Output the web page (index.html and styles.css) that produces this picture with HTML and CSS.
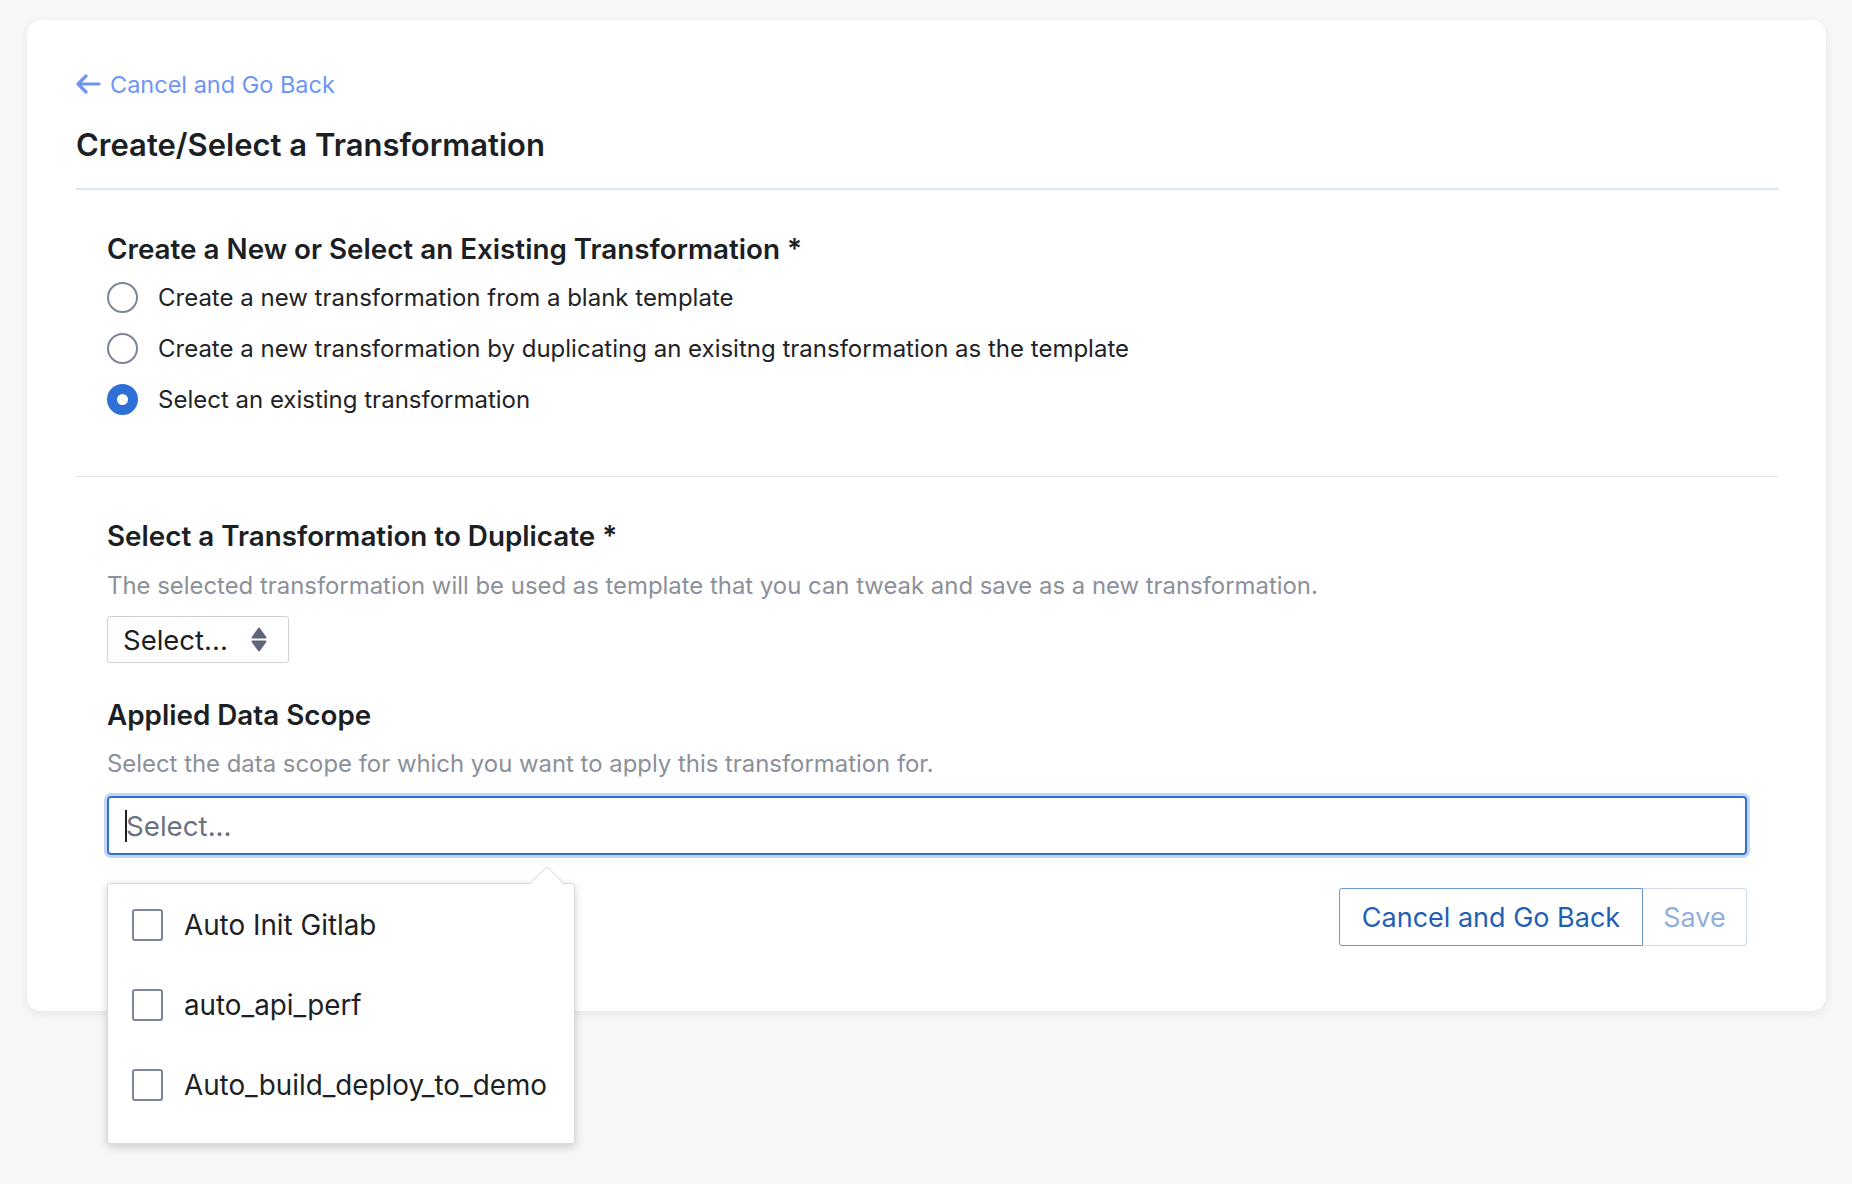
FILE: index.html
```html
<!DOCTYPE html>
<html>
<head>
<meta charset="utf-8">
<link rel="stylesheet" href="styles.css">
</head>
<body>
<div class="card">
  <a class="back-link" href="#">
    <svg class="back-arrow" width="26" height="22" viewBox="0 0 26 22"><path d="M24 11H3.5M11 3L3 11L11 19" fill="none" stroke="#6e95f6" stroke-width="3.2" stroke-linecap="round" stroke-linejoin="round"/></svg>
    <span>Cancel and Go Back</span>
  </a>
  <h1 class="title">Create/Select a Transformation</h1>
  <div class="divider-blue"></div>

  <div class="section section-first">
    <h2 class="heading">Create a New or Select an Existing Transformation *</h2>
    <div class="radio-row"><span class="radio"></span><span class="label">Create a new transformation from a blank template</span></div>
    <div class="radio-row"><span class="radio"></span><span class="label">Create a new transformation by duplicating an exisitng transformation as the template</span></div>
    <div class="radio-row"><span class="radio radio-checked"></span><span class="label">Select an existing transformation</span></div>
  </div>
  <div class="divider-gray"></div>

  <div class="section section-second">
    <h2 class="heading">Select a Transformation to Duplicate *</h2>
    <p class="desc desc-first">The selected transformation will be used as template that you can tweak and save as a new transformation.</p>
    <div class="select-box">
      <span>Select...</span>
      <svg class="updown" width="16" height="25" viewBox="0 0 16 25"><path d="M8 1.5L14.5 10.5H1.5Z M8 23.5L14.5 14.5H1.5Z" fill="#5d6778" stroke="#5d6778" stroke-width="2" stroke-linejoin="round"/></svg>
    </div>

    <h2 class="heading heading-scope">Applied Data Scope</h2>
    <p class="desc">Select the data scope for which you want to apply this transformation for.</p>
    <div class="input-wrap">
      <div class="input"><span class="caret"></span><span class="placeholder">Select...</span></div>
      <div class="popover">
        <div class="popover-arrow"></div>
        <div class="item"><span class="checkbox"></span><span class="item-label">Auto Init Gitlab</span></div>
        <div class="item"><span class="checkbox"></span><span class="item-label">auto_api_perf</span></div>
        <div class="item"><span class="checkbox"></span><span class="item-label">Auto_build_deploy_to_demo</span></div>
      </div>
    </div>
    <div class="actions">
      <button class="btn btn-cancel">Cancel and Go Back</button>
      <button class="btn btn-save">Save</button>
    </div>
  </div>
</div>
</body>
</html>
```

FILE: styles.css
```css
html, body {
  margin: 0;
  padding: 0;
  background: #f7f7f7;
  font-family: Inter, "Noto Sans", "Liberation Sans", sans-serif;
  color: #1c1f24;
}
body {
  padding: 20px 26px 0 27px;
  height: 1184px;
  box-sizing: border-box;
  overflow: hidden;
}
.card {
  background: #fff;
  border-radius: 14px;
  box-shadow: 0 3px 10px rgba(0,0,0,0.07), 0 0 1px rgba(0,0,0,0.05);
  height: 991px;
  box-sizing: border-box;
  padding: 50px 47px 0 48px;
}
.back-link {
  display: flex;
  align-items: center;
  gap: 9px;
  height: 28px;
  color: #6e95f6;
  text-decoration: none;
  font-size: 23.5px;
}
.title {
  margin: 29px 0 0 1px;
  font-size: 31px;
  line-height: 36px;
  font-weight: 600;
  color: #1c1f24;
}
.divider-blue {
  margin: 25px 0 0 1px;
  height: 2px;
  background: #dbe5f8;
}
.divider-gray {
  margin-left: 1px;
  height: 1px;
  background: #e1e3e6;
}
.section {
  padding: 0 32px 0 32px;
}
.section-first {
  padding-top: 43px;
  padding-bottom: 51px;
}
.section-second {
  padding-top: 43px;
  position: relative;
}
.heading {
  margin: 0;
  font-size: 27.8px;
  line-height: 32px;
  font-weight: 600;
  color: #1c1f24;
}
.section-first .heading {
  margin-bottom: 7px;
}
.radio-row {
  display: flex;
  align-items: center;
  height: 51px;
  gap: 20px;
}
.radio {
  width: 31px;
  height: 31px;
  box-sizing: border-box;
  border: 2px solid #7b8596;
  border-radius: 50%;
  flex: none;
  background: #fff;
}
.radio-checked {
  border: 10px solid #2f6fd6;
  background: #fff;
}
.label {
  font-size: 24px;
  line-height: 30px;
  color: #1f2328;
}
.desc {
  margin: 18px 0 0 0;
  font-size: 23.9px;
  line-height: 30px;
  color: #8c9099;
}
.desc-first {
  margin-top: 19px;
}
.select-box {
  margin-top: 15px;
  width: 182px;
  height: 47px;
  box-sizing: border-box;
  border: 1.5px solid #cfd1d4;
  border-radius: 3px;
  display: flex;
  align-items: center;
  padding: 0 21px 0 15px;
  justify-content: space-between;
  font-size: 27.5px;
  color: #1c1f24;
}
.heading-scope {
  margin-top: 36px;
}
.input-wrap {
  position: relative;
  margin-top: 17px;
}
.input {
  height: 59px;
  box-sizing: border-box;
  border: 2.5px solid #2f6fd6;
  border-radius: 4px;
  box-shadow: 0 0 0 3px #c3d6f4;
  display: flex;
  align-items: center;
  padding-left: 16px;
  font-size: 27.7px;
}
.caret {
  width: 2px;
  height: 32px;
  background: #1c1f24;
  margin-right: -1px;
}
.placeholder {
  color: #6b7280;
}
.popover {
  position: absolute;
  left: 0;
  top: 87px;
  width: 468px;
  height: 261px;
  background: #fff;
  border: 1px solid #d6d8db;
  border-radius: 3px;
  box-shadow: 0 3px 10px rgba(0,0,0,0.18);
  box-sizing: border-box;
  padding-top: 1px;
  z-index: 5;
}
.popover-arrow {
  position: absolute;
  left: 426px;
  top: -13px;
  width: 25px;
  height: 25px;
  background: #fff;
  border-left: 1px solid #d6d8db;
  border-top: 1px solid #d6d8db;
  transform: rotate(45deg);
  border-top-left-radius: 4px;
}
.item {
  position: relative;
  display: flex;
  align-items: center;
  height: 80px;
  padding-left: 24px;
  gap: 21px;
}
.checkbox {
  width: 31px;
  height: 32px;
  box-sizing: border-box;
  border: 2px solid #7b8596;
  border-radius: 3px;
  flex: none;
}
.item-label {
  font-size: 27.8px;
  color: #1c1f24;
}
.actions {
  margin-top: 33px;
  display: flex;
  justify-content: flex-end;
}
.btn {
  height: 58px;
  box-sizing: border-box;
  background: #fff;
  font-family: inherit;
  font-size: 27px;
  padding: 0;
  margin: 0;
  cursor: pointer;
}
.btn-cancel {
  width: 304px;
  border: 1.5px solid #6f97cd;
  border-radius: 3px 0 0 3px;
  color: #1f5fb5;
}
.btn-save {
  width: 104px;
  border: 1.5px solid #cbdaef;
  border-left: none;
  border-radius: 0 3px 3px 0;
  color: #90afdc;
}
```
